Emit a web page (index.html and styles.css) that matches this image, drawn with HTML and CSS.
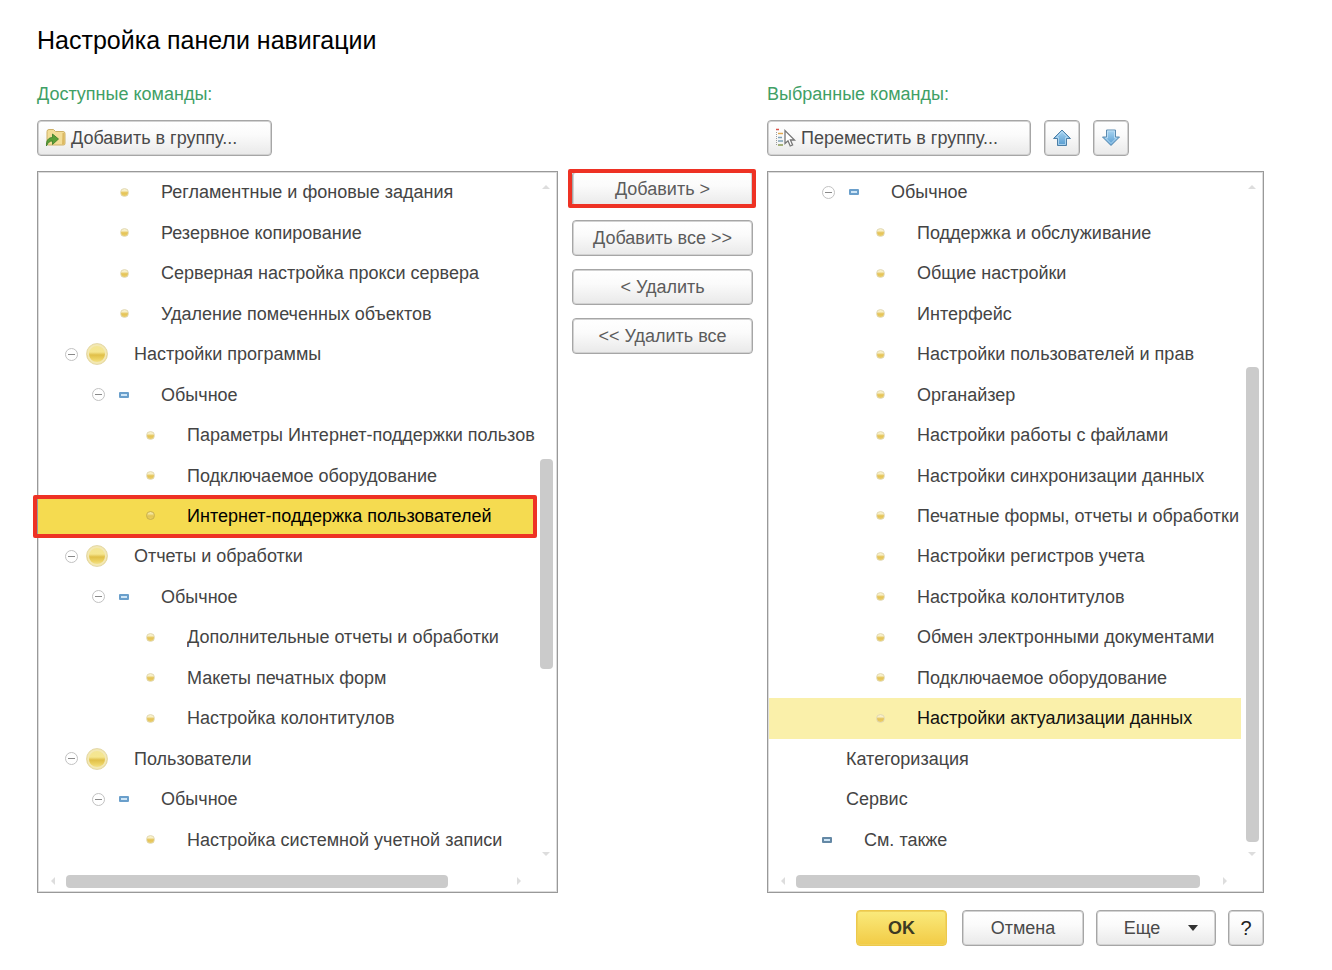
FILE: index.html
```html
<!DOCTYPE html>
<html lang="ru">
<head>
  <meta charset="UTF-8" />
  <meta name="viewport" content="width=device-width, initial-scale=1.0" />
  <title>Настройка панели навигации</title>
  <link rel="stylesheet" href="styles.css">
</head>
<body>

  <h1 class="title">Настройка панели навигации</h1>

  <div class="columns">

    <!-- Доступные команды -->
    <section class="panel">
      <h2 class="caption">Доступные команды:</h2>
      <div class="toolbar">
        <button type="button" class="btn btn-add-group">
          <svg width="22" height="20" viewBox="0 0 22 20">
            <path d="M2 3.5 Q2 1.5 4 1.5 H8.5 L10.5 3.5 H18 Q20 3.5 20 5.500 V15.500 Q20 17 18.500 17 H3.500 Q2 17 2 15.500Z" fill="#f3dd97" stroke="#cdb066"/>
            <path d="M17.500 5 H19.500 V16.500 H17Z" fill="#dcb963"/>
            <path d="M1.500 18 C1 12.500 3.500 9.500 7.500 9.500 V6 L13.500 11 L7.500 16.500 V13 C4.500 13 3 14.500 1.500 18Z" fill="#5b9f36" stroke="#397b28" stroke-width=".8"/>
          </svg>
          <span>Добавить в группу...</span>
        </button>
      </div>

      <div class="tree">
        <ul class="rows" id="availableRows"></ul>
        <div class="vscroll">
          <i class="arrow up"></i>
          <div class="vtrack vtrack-available"><div class="thumb"></div></div>
          <i class="arrow down"></i>
        </div>
        <div class="hscroll">
          <i class="arrow left"></i>
          <div class="htrack htrack-available"><div class="thumb"></div></div>
          <i class="arrow right"></i>
        </div>
      </div>
    </section>

    <!-- Кнопки переноса -->
    <div class="transfer">
      <button type="button" class="btn marked">Добавить &gt;</button>
      <button type="button" class="btn">Добавить все &gt;&gt;</button>
      <button type="button" class="btn">&lt; Удалить</button>
      <button type="button" class="btn">&lt;&lt; Удалить все</button>
    </div>

    <!-- Выбранные команды -->
    <section class="panel">
      <h2 class="caption">Выбранные команды:</h2>
      <div class="toolbar">
        <button type="button" class="btn btn-move-group">
          <svg width="22" height="20" viewBox="0 0 22 20">
            <path d="M1 1.500h3" stroke="#d9534a" stroke-width="1.500"/>
            <path d="M3 5.500h5" stroke="#e0a850" stroke-width="1.500"/>
            <path d="M3 9.500h4M3 13h5" stroke="#7fa3b8" stroke-width="1.500"/>
            <path d="M3 17h5" stroke="#8a9a50" stroke-width="1.500"/>
            <path d="M1.500 4v13.500" stroke="#999" stroke-dasharray="1 1"/>
            <path d="M10 2.500 V15.500 L13 12.800 L15.200 18 L17.600 17 L15.400 12 H19.500Z" fill="#fff" stroke="#777" stroke-width="1.300"/>
          </svg>
          <span>Переместить в группу...</span>
        </button>
        <button type="button" class="btn btn-square" aria-label="Вверх">
          <svg width="20" height="20" viewBox="0 0 20 20">
            <path d="M10 2 L18.500 10.500 H14.500 V17.500 H5.500 V10.500 H1.500Z" fill="url(#blue)" stroke="#4d7fa6" stroke-linejoin="round"/>
            <path d="M10 4 L15.500 9.500 H13.500 V16.500 H6.500 V9.500 H4.500Z" fill="none" stroke="#b9dcf3" stroke-width=".8"/>
          </svg>
        </button>
        <button type="button" class="btn btn-square" aria-label="Вниз">
          <svg width="20" height="20" viewBox="0 0 20 20">
            <path d="M10 17.500 L18.500 9 H14.500 V2 H5.500 V9 H1.500Z" fill="url(#blue)" stroke="#5b8bb0" stroke-linejoin="round"/>
            <path d="M10 15.500 L15.500 10 H13.500 V3 H6.500 V10 H4.500Z" fill="none" stroke="#c4e2f6" stroke-width=".8"/>
          </svg>
        </button>
      </div>

      <div class="tree">
        <ul class="rows" id="selectedRows"></ul>
        <div class="vscroll">
          <i class="arrow up"></i>
          <div class="vtrack vtrack-selected"><div class="thumb"></div></div>
          <i class="arrow down"></i>
        </div>
        <div class="hscroll">
          <i class="arrow left"></i>
          <div class="htrack htrack-selected"><div class="thumb"></div></div>
          <i class="arrow right"></i>
        </div>
      </div>
    </section>

  </div>

  <!-- Нижние кнопки -->
  <div class="footer">
    <button type="button" class="btn btn-ok">OK</button>
    <button type="button" class="btn btn-cancel">Отмена</button>
    <button type="button" class="btn btn-more">Еще <i class="caret"></i></button>
    <button type="button" class="btn btn-square btn-help">?</button>
  </div>

  <svg class="defs" width="0" height="0" aria-hidden="true">
    <linearGradient id="blue" x1="0" y1="0" x2="0" y2="1">
      <stop offset="0" stop-color="#a9d5f2"/>
      <stop offset="1" stop-color="#559bd0"/>
    </linearGradient>
  </svg>

  <script>
    // level - отступ, icon - значок, open - есть кнопка сворачивания
    const available = [
      { level: 2, icon: "dot", text: "Регламентные и фоновые задания" },
      { level: 2, icon: "dot", text: "Резервное копирование" },
      { level: 2, icon: "dot", text: "Серверная настройка прокси сервера" },
      { level: 2, icon: "dot", text: "Удаление помеченных объектов" },
      { level: 1, icon: "ball", open: true, text: "Настройки программы" },
      { level: 2, icon: "dash", open: true, text: "Обычное" },
      { level: 3, icon: "dot", text: "Параметры Интернет-поддержки пользователей" },
      { level: 3, icon: "dot", text: "Подключаемое оборудование" },
      { level: 3, icon: "dot", state: "current marked", text: "Интернет-поддержка пользователей" },
      { level: 1, icon: "ball", open: true, text: "Отчеты и обработки" },
      { level: 2, icon: "dash", open: true, text: "Обычное" },
      { level: 3, icon: "dot", text: "Дополнительные отчеты и обработки" },
      { level: 3, icon: "dot", text: "Макеты печатных форм" },
      { level: 3, icon: "dot", text: "Настройка колонтитулов" },
      { level: 1, icon: "ball", open: true, text: "Пользователи" },
      { level: 2, icon: "dash", open: true, text: "Обычное" },
      { level: 3, icon: "dot", text: "Настройка системной учетной записи" }
    ];

    const selected = [
      { level: 2, icon: "dash", open: true, text: "Обычное" },
      { level: 3, icon: "dot", text: "Поддержка и обслуживание" },
      { level: 3, icon: "dot", text: "Общие настройки" },
      { level: 3, icon: "dot", text: "Интерфейс" },
      { level: 3, icon: "dot", text: "Настройки пользователей и прав" },
      { level: 3, icon: "dot", text: "Органайзер" },
      { level: 3, icon: "dot", text: "Настройки работы с файлами" },
      { level: 3, icon: "dot", text: "Настройки синхронизации данных" },
      { level: 3, icon: "dot", text: "Печатные формы, отчеты и обработки" },
      { level: 3, icon: "dot", text: "Настройки регистров учета" },
      { level: 3, icon: "dot", text: "Настройка колонтитулов" },
      { level: 3, icon: "dot", text: "Обмен электронными документами" },
      { level: 3, icon: "dot", text: "Подключаемое оборудование" },
      { level: 3, icon: "dot", state: "inactive", text: "Настройки актуализации данных" },
      { level: "text", text: "Категоризация" },
      { level: "text", text: "Сервис" },
      { level: 1, icon: "dash dark", text: "См. также" }
    ];

    function renderRows(id, items) {
      document.getElementById(id).innerHTML = items.map(item => `
        <li class="row level-${item.level} ${item.state || ""}">
          <span class="cell">${item.open ? '<button type="button" class="toggle" aria-label="Свернуть"></button>' : ""}</span>
          <span class="cell cell-icon">${item.icon ? `<i class="${item.icon}"></i>` : ""}</span>
          <span class="name">${item.text}</span>
        </li>`).join("");
    }

    renderRows("availableRows", available);
    renderRows("selectedRows", selected);
  </script>
</body>
</html>
```
FILE: styles.css
```css
* {
  box-sizing: border-box;
}

body {
  margin: 0;
  padding: 24px 68px 24px 37px;
  background: #fff;
  color: #444;
  font-family: "Liberation Sans", Arial, sans-serif;
  font-size: 18px;
}

.title {
  margin: 0 0 28px;
  font-size: 25px;
  font-weight: 400;
  line-height: 32px;
  color: #000;
}

.columns {
  display: grid;
  grid-template-columns: 521fr 181px 497fr;
  gap: 14px;
}

.panel {
  min-width: 0;
}

.caption {
  margin: 0;
  font-size: 18px;
  font-weight: 400;
  line-height: 20px;
  color: #3fa066;
}

.toolbar {
  display: flex;
  gap: 13px;
  margin: 16px 0 15px;
}

/* Кнопки */
.btn {
  position: relative;
  display: flex;
  align-items: center;
  justify-content: center;
  height: 36px;
  padding: 0 7px;
  border: 1px solid #a6a6a6;
  border-radius: 4px;
  background: linear-gradient(#fff, #fbfbfb 40%, #e9e9e9);
  box-shadow: inset 0 0 0 1px #d2d2d2;
  color: #4a4a4a;
  font-family: inherit;
  font-size: 18px;
  white-space: nowrap;
  cursor: pointer;
}

.btn-add-group,
.btn-move-group {
  justify-content: flex-start;
  gap: 4px;
}

.btn-add-group {
  width: 235px;
}

.btn-move-group {
  width: 264px;
}

.btn-square {
  width: 36px;
  padding: 0;
}

.transfer {
  display: flex;
  flex-direction: column;
  gap: 13px;
  padding-top: 87px;
}

.transfer .btn {
  color: #5c5c5c;
}

/* Красная рамка */
.marked {
  position: relative;
}

.marked::after {
  content: "";
  position: absolute;
  inset: -1px -2px -2px -5px;
  border: 4px solid #ee3224;
  border-radius: 2px;
  pointer-events: none;
}

.btn.marked::after {
  inset: -3px -4px -2px -5px;
}

/* Дерево команд */
.tree {
  display: grid;
  grid-template-columns: 1fr 22px;
  grid-template-rows: 688px 32px;
  border: 1px solid #999;
  outline: 1px solid #ddd;
  outline-offset: -2px;
}

.rows {
  display: flex;
  flex-direction: column;
  min-width: 0;
  margin: 0;
  padding: 0;
  list-style: none;
}

.row {
  display: flex;
  flex: 1;
  align-items: center;
}

.level-1 {
  padding-left: 20px;
}

.level-2 {
  padding-left: 47px;
}

.level-3 {
  padding-left: 73px;
}

.level-text {
  padding-left: 78px;
}

.level-text .cell {
  display: none;
}

.current {
  background: #f5db50;
  color: #000;
}

.inactive {
  background: #faf0aa;
  color: #111;
}

.cell {
  display: flex;
  flex: none;
  align-items: center;
  justify-content: center;
  width: 26px;
}

.cell-icon {
  margin-right: 24px;
}

.name {
  flex: 1;
  min-width: 0;
  overflow: hidden;
  line-height: 24px;
  white-space: nowrap;
}

.toggle {
  display: flex;
  flex: none;
  align-items: center;
  justify-content: center;
  width: 13px;
  height: 13px;
  padding: 0;
  border: 1px solid #c2c2c2;
  border-radius: 50%;
  background: #fff;
}

.toggle::before {
  content: "";
  width: 7px;
  height: 1px;
  background: #8a8a8a;
}

.dot {
  width: 9px;
  height: 9px;
  border: 1px solid #e2d9b4;
  border-radius: 50%;
  background: linear-gradient(#f8f0c8 25%, #e4c255 55%, #ecd06c);
}

.current .dot {
  border-color: #c9b04c;
  background: linear-gradient(#f3e49a 25%, #e2c450 55%, #ecd05a);
}

.ball {
  width: 22px;
  height: 22px;
  border: 1px solid #e4d9ac;
  border-radius: 50%;
  background: linear-gradient(#f3e596, #f5e68f 40%, #e0bf48 55%, #ecd262 75%, #f6eaa2);
  box-shadow: inset 0 0 0 2px #f3e8b4;
}

.dash {
  width: 10px;
  height: 6px;
  border: 2px solid #6a9fcb;
  border-radius: 1px;
  background: #cfe6f7;
}

.dash.dark {
  border-color: #6488a5;
}

/* Полосы прокрутки */
.vscroll {
  display: flex;
  flex-direction: column;
  align-items: center;
  padding: 13px 0 4px;
}

.vtrack {
  display: grid;
  flex: 1;
  width: 13px;
  margin: 13px 0 10px;
}

.vtrack-available {
  grid-template-rows: 257fr 210fr 173fr;
}

.vtrack-selected {
  grid-template-rows: 165fr 475fr 0fr;
}

.vtrack .thumb {
  grid-row: 2;
}

.hscroll {
  display: flex;
  align-items: center;
  padding: 10px 14px 0 13px;
}

.htrack {
  display: grid;
  flex: 1;
  height: 13px;
  margin: 0 11px;
}

.htrack-available {
  grid-template-columns: 382fr 58fr;
}

.htrack-selected {
  grid-template-columns: 404fr 12fr;
}

.thumb {
  border-radius: 4px;
  background: #cbcbcb;
}

.arrow {
  border: 4px solid transparent;
}

.arrow.up {
  border-top: 0;
  border-bottom-color: #ddd;
}

.arrow.down {
  border-bottom: 0;
  border-top-color: #ddd;
}

.arrow.left {
  border-left: 0;
  border-right-color: #ddd;
}

.arrow.right {
  border-right: 0;
  border-left-color: #ddd;
}

/* Нижние кнопки */
.footer {
  display: flex;
  justify-content: flex-end;
  gap: 12px;
  margin-top: 17px;
}

.btn-ok {
  width: 91px;
  margin-right: 3px;
  border-color: #edc94b;
  background: linear-gradient(#faea7c, #f2cb45);
  box-shadow: inset 0 0 0 1px #f0d25c;
  color: #3d3a22;
  font-weight: 700;
}

.btn-cancel {
  width: 122px;
}

.btn-more {
  gap: 28px;
  width: 120px;
  padding: 0 13px 0 23px;
}

.caret {
  border: 5px solid transparent;
  border-top: 6px solid #333;
  border-bottom: 0;
}

.btn-help {
  color: #222;
  font-size: 20px;
}

.defs {
  position: absolute;
}
```
